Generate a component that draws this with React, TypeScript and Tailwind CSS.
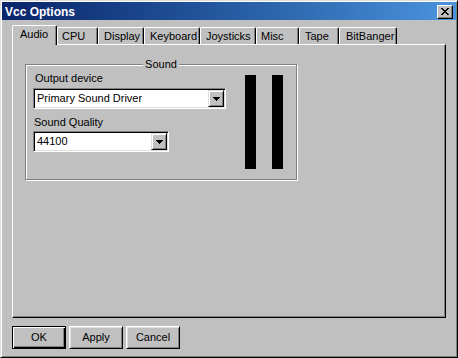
import React from "react";

const tabs = [
  { label: "Audio", w: "w-[45px]", pl: "pl-[7px]", sel: true },
  { label: "CPU", w: "w-[41px]", pl: "pl-[4px]", sel: false },
  { label: "Display", w: "w-[46px]", pl: "pl-[5px]", sel: false },
  { label: "Keyboard", w: "w-[56px]", pl: "pl-[5px]", sel: false },
  { label: "Joysticks", w: "w-[56px]", pl: "pl-[5px]", sel: false },
  { label: "Misc", w: "w-[43px]", pl: "pl-[4px]", sel: false },
  { label: "Tape", w: "w-[40px]", pl: "pl-[5px]", sel: false },
  { label: "BitBanger", w: "w-[58px]", pl: "pl-[6px]", sel: false },
];

function CloseGlyph() {
  return (
    <svg width="8" height="7" viewBox="0 0 8 7" shapeRendering="crispEdges">
      <rect x="0" y="0" width="2" height="1" fill="#000" />
      <rect x="6" y="0" width="2" height="1" fill="#000" />
      <rect x="1" y="1" width="2" height="1" fill="#000" />
      <rect x="5" y="1" width="2" height="1" fill="#000" />
      <rect x="2" y="2" width="4" height="1" fill="#000" />
      <rect x="3" y="3" width="2" height="1" fill="#000" />
      <rect x="2" y="4" width="4" height="1" fill="#000" />
      <rect x="1" y="5" width="2" height="1" fill="#000" />
      <rect x="5" y="5" width="2" height="1" fill="#000" />
      <rect x="0" y="6" width="2" height="1" fill="#000" />
      <rect x="6" y="6" width="2" height="1" fill="#000" />
    </svg>
  );
}

function Arrow() {
  return (
    <svg width="7" height="4" viewBox="0 0 7 4" shapeRendering="crispEdges">
      <rect x="0" y="0" width="7" height="1" fill="#000" />
      <rect x="1" y="1" width="5" height="1" fill="#000" />
      <rect x="2" y="2" width="3" height="1" fill="#000" />
      <rect x="3" y="3" width="1" height="1" fill="#000" />
    </svg>
  );
}

function Combo({ value, width }: { value: string; width: string }) {
  return (
    <div
      className={`${width} h-[21px] p-[1px] bg-white border border-t-[#808080] border-l-[#808080] border-r-white border-b-white shadow-[inset_1px_1px_0_#000,inset_-1px_-1px_0_#dfdfdf] flex`}
    >
      <div className="flex-1 flex items-center pl-[2px] leading-[13px] text-[11px] text-black whitespace-nowrap">
        {value}
      </div>
      <div className="w-[16px] h-[17px] bg-[#c0c0c0] border border-t-[#dfdfdf] border-l-[#dfdfdf] border-r-black border-b-black shadow-[inset_1px_1px_0_#fff,inset_-1px_-1px_0_#808080] flex items-center justify-center">
        <Arrow />
      </div>
    </div>
  );
}

function Button({ label, def }: { label: string; def?: boolean }) {
  return (
    <div
      className={
        def
          ? "w-[54px] h-[23px] flex items-center justify-center border border-black shadow-[inset_1px_1px_0_#fff,inset_-1px_-1px_0_#000,inset_-2px_-2px_0_#808080] text-[11px] leading-[13px] text-black"
          : "w-[54px] h-[23px] flex items-center justify-center border border-t-white border-l-white border-r-black border-b-black shadow-[inset_1px_1px_0_#dfdfdf,inset_-1px_-1px_0_#808080] text-[11px] leading-[13px] text-black"
      }
    >
      {label}
    </div>
  );
}

export default function App() {
  return (
    <div className="w-[458px] h-[358px] bg-[#c0c0c0] border border-t-[#dfdfdf] border-l-[#dfdfdf] border-r-black border-b-black shadow-[inset_1px_1px_0_#fff,inset_-1px_-1px_0_#808080] p-[1px] flex flex-col font-['Liberation_Sans',Arial,sans-serif] text-[11px] text-black select-none">
      {/* Title bar */}
      <div className="h-[18px] bg-linear-to-r from-[#0a246a] to-[#4a94dc] flex items-center pl-[3px] pr-[3px]">
        <div className="flex-1 text-white font-bold text-[12px] leading-[14px] pt-[1px]">Vcc Options</div>
        <div className="w-[16px] h-[14px] bg-[#c0c0c0] border border-t-white border-l-white border-r-black border-b-black shadow-[inset_-1px_-1px_0_#808080] flex items-center justify-center mt-[1px]">
          <CloseGlyph />
        </div>
      </div>

      {/* Body */}
      <div className="flex flex-col px-[10px] pt-[5px]">
        {/* Tabs */}
        <div className="h-[19px] flex items-end">
          {tabs.map((t) =>
            t.sel ? (
              <div
                key={t.label}
                className={`${t.w} ${t.pl} h-[20px] -mb-[1px] relative z-10 bg-[#c0c0c0] border-l border-t border-r border-l-white border-t-white border-r-black rounded-t-[2px] shadow-[inset_-1px_0_0_#808080] pt-[2px] leading-[13px] whitespace-nowrap`}
              >
                {t.label}
              </div>
            ) : (
              <div
                key={t.label}
                className={`${t.w} ${t.pl} h-[17px] bg-[#c0c0c0] border-l border-t border-r border-l-white border-t-white border-r-black rounded-t-[2px] shadow-[inset_-1px_0_0_#808080] pt-[2px] leading-[13px] whitespace-nowrap`}
              >
                {t.label}
              </div>
            )
          )}
        </div>

        {/* Panel */}
        <div className="h-[274px] border border-t-white border-l-white border-r-black border-b-black shadow-[inset_-1px_-1px_0_#808080] pl-[12px] pt-[19px]">
          <div className="relative w-[272px] h-[116px] border border-[#808080] shadow-[1px_1px_0_#fff,inset_1px_1px_0_#fff] flex">
            <div className="absolute left-1/2 -translate-x-1/2 -top-[7px] bg-[#c0c0c0] px-[2px] leading-[13px]">
              Sound
            </div>
            <div className="flex flex-col pl-[7px] pt-[7px]">
              <div className="leading-[13px] pl-[2px]">Output device</div>
              <div className="mt-[3px]">
                <Combo value="Primary Sound Driver" width="w-[193px]" />
              </div>
              <div className="mt-[7px] leading-[13px] pl-[1px]">Sound Quality</div>
              <div className="mt-[2px]">
                <Combo value="44100" width="w-[136px]" />
              </div>
            </div>
            <div className="flex gap-[16px] ml-[19px] mt-[10px]">
              <div className="w-[11px] h-[94px] bg-black" />
              <div className="w-[11px] h-[94px] bg-black" />
            </div>
          </div>
        </div>

        {/* Buttons */}
        <div className="mt-[8px] flex gap-[3px]">
          <Button label="OK" def />
          <Button label="Apply" />
          <Button label="Cancel" />
        </div>
      </div>
    </div>
  );
}
